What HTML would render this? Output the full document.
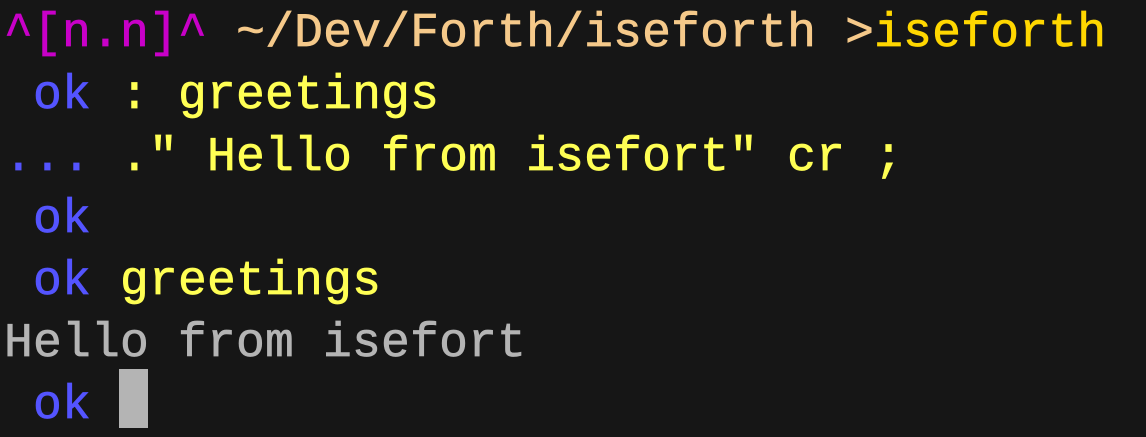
<!DOCTYPE html>
<html><head><meta charset="utf-8"><style>
html,body{margin:0;padding:0;background:#161616;width:1146px;height:428px;overflow:hidden}
pre{margin:0;position:absolute;left:4px;top:3px;font-family:"Liberation Mono",monospace;font-size:48px;line-height:62px;letter-spacing:0.2px;color:#b4b4b4;-webkit-text-stroke:0.7px currentColor}
.m{color:#c800c8}.p{color:#f5c98a}.Y{color:#ffd700}.y{color:#ffff54}.b{color:#5454ff}.g{color:#b4b4b4}
#cur{position:absolute;left:119px;top:369px;width:29px;height:59px;background:#b4b4b4}
</style></head><body>
<pre><span class="m">^[n.n]^</span> <span class="p">~/Dev/Forth/iseforth &gt;</span><span class="Y">iseforth</span>
<span class="b"> ok</span> <span class="y">: greetings</span>
<span class="b">...</span> <span class="y">." Hello from isefort" cr ;</span>
<span class="b"> ok</span>
<span class="b"> ok</span> <span class="y">greetings</span>
<span class="g">Hello from isefort</span>
<span class="b"> ok</span></pre>
<div id="cur"></div>
</body></html>
